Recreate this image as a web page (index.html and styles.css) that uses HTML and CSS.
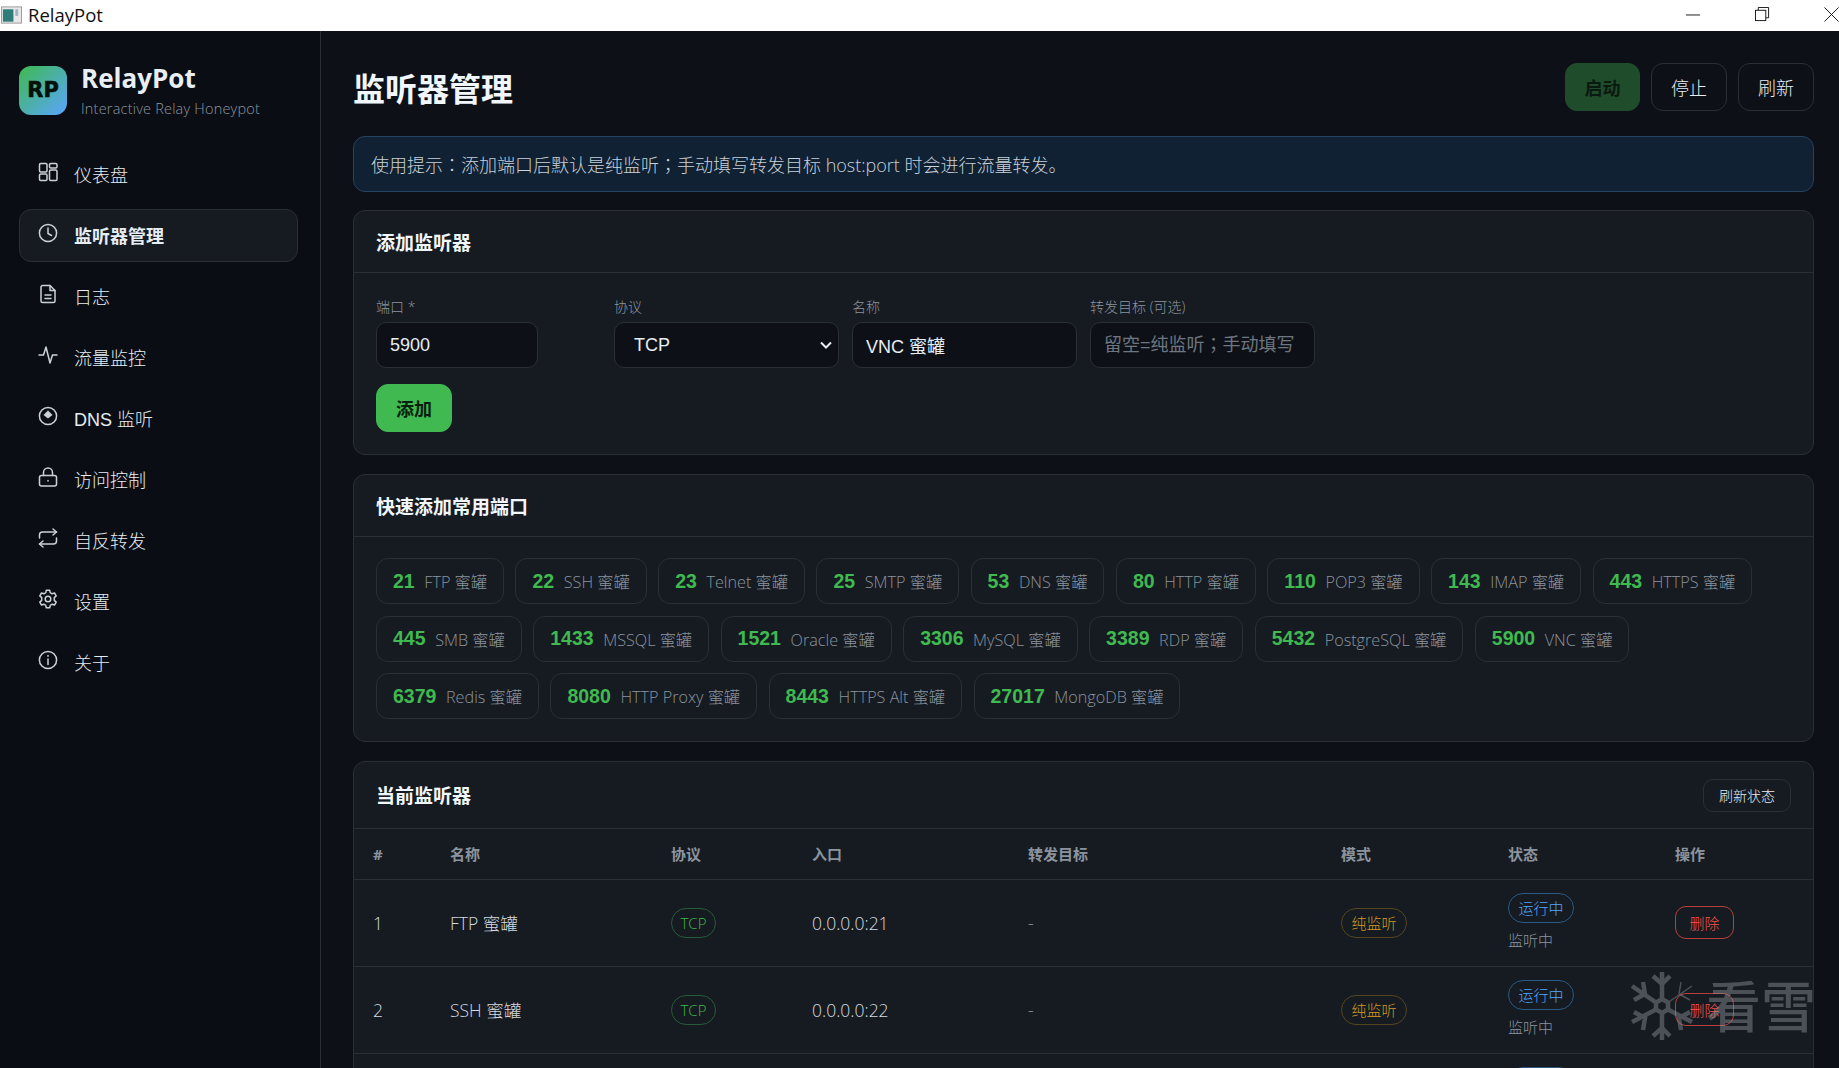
FILE: index.html
```html
<!DOCTYPE html>
<html lang="zh-CN">

<head>
    <meta charset="UTF-8">
    <meta name="viewport" content="width=device-width, initial-scale=1.0">
    <title>RelayPot</title>

    <link rel="stylesheet" href="styles.css">
</head>

<body>

    <div class="titlebar">
        <div class="titlebar-name">
            <svg class="titlebar-icon" viewBox="0 0 22 18">
                <rect x="0.5" y="0.5" width="21" height="17" fill="#e8e8e8" stroke="#9a9a9a" />
                <rect x="2" y="3" width="11" height="13" fill="#2f7d7a" />
                <rect x="15" y="3" width="3" height="7" fill="#9fb4c4" />
            </svg>
            <span>RelayPot</span>
        </div>
        <div class="window-controls">
            <svg viewBox="0 0 16 16" class="win-min"><path d="M0 8.5H15" /></svg>
            <svg viewBox="0 0 16 16" class="win-restore"><rect x="0.5" y="3.5" width="11" height="11" /><path d="M3.5 3.5V0.5H14.5V11.5H11.5" /></svg>
            <svg viewBox="0 0 16 16" class="win-close"><path d="M0.5 0.5L15.5 15.5M15.5 0.5L0.5 15.5" /></svg>
        </div>
    </div>

    <div class="app">
        <aside class="sidebar">
            <div class="brand">
                <div class="brand-logo">RP</div>
                <div class="brand-text">
                    <div class="brand-name">RelayPot</div>
                    <div class="brand-sub">Interactive Relay Honeypot</div>
                </div>
            </div>

            <nav class="nav">
                <a class="nav-item">
                    <svg class="nav-icon" viewBox="0 0 20 20"><rect x="1.5" y="1.5" width="7.5" height="8.5" rx="1.2" /><rect x="11.5" y="1.5" width="7.5" height="4.5" rx="1.2" /><rect x="1.5" y="12" width="7.5" height="6.5" rx="1.2" /><rect x="11.5" y="8" width="7.5" height="10.5" rx="1.2" /></svg>
                    <span>仪表盘</span>
                </a>
                <a class="nav-item active">
                    <svg class="nav-icon" viewBox="0 0 20 20"><circle cx="10" cy="10" r="8.6" /><path d="M10 5V10.5L13.5 12.5" /></svg>
                    <span>监听器管理</span>
                </a>
                <a class="nav-item">
                    <svg class="nav-icon" viewBox="0 0 20 20"><path d="M3 3A1.5 1.5 0 0 1 4.5 1.5H12L17 6.5V17A1.5 1.5 0 0 1 15.5 18.5H4.5A1.5 1.5 0 0 1 3 17Z" /><path d="M12 1.5V6.5H17M7 11H13M7 14.5H13" /></svg>
                    <span>日志</span>
                </a>
                <a class="nav-item">
                    <svg class="nav-icon" viewBox="0 0 20 20"><path d="M1 10H5.5L8 2L12 18L14.5 10H19" /></svg>
                    <span>流量监控</span>
                </a>
                <a class="nav-item">
                    <svg class="nav-icon" viewBox="0 0 20 20"><circle cx="10" cy="10" r="8.6" /><path class="fill" d="M10 4.5L14.5 9L10 12.5L5.5 9Z" /></svg>
                    <span>DNS 监听</span>
                </a>
                <a class="nav-item">
                    <svg class="nav-icon" viewBox="0 0 20 20"><rect x="1.5" y="8.5" width="17" height="10.5" rx="2" /><path d="M5.5 8.5V5.5A4.5 4.5 0 0 1 14.5 5.5V8.5" /><path d="M10 13.5V14" /></svg>
                    <span>访问控制</span>
                </a>
                <a class="nav-item">
                    <svg class="nav-icon" viewBox="0 0 20 20"><path d="M15 1L18.5 4L15 7" /><path d="M1.5 10V7A3 3 0 0 1 4.5 4H18.5" /><path d="M5 19L1.5 16L5 13" /><path d="M18.5 10V13A3 3 0 0 1 15.5 16H1.5" /></svg>
                    <span>自反转发</span>
                </a>
                <a class="nav-item">
                    <svg class="nav-icon" viewBox="0 0 20 20"><circle cx="10" cy="10" r="2.8" /><path d="M8.3 1.2H11.7L12.2 3.7L14.1 4.8L16.5 4L18.2 6.9L16.3 8.6V11.4L18.2 13.1L16.5 16L14.1 15.2L12.2 16.3L11.7 18.8H8.3L7.8 16.3L5.9 15.2L3.5 16L1.8 13.1L3.7 11.4V8.6L1.8 6.9L3.5 4L5.9 4.8L7.8 3.7Z" /></svg>
                    <span>设置</span>
                </a>
                <a class="nav-item">
                    <svg class="nav-icon" viewBox="0 0 20 20"><circle cx="10" cy="10" r="8.6" /><path d="M10 9V14.5M10 5.5V6.2" /></svg>
                    <span>关于</span>
                </a>
            </nav>
        </aside>

        <main class="main">
            <div class="page-head">
                <h1>监听器管理</h1>
                <div class="head-actions">
                    <button class="btn btn-start">启动</button>
                    <button class="btn">停止</button>
                    <button class="btn">刷新</button>
                </div>
            </div>

            <div class="tip"><span>使用提示<i lang="zh-TW">：</i>添加端口后默认是纯监听<i lang="zh-TW">；</i>手动填写转发目标 host:port 时会进行流量转发。</span></div>

            <section class="card">
                <div class="card-head">
                    <h2>添加监听器</h2>
                </div>
                <div class="card-body form-body">
                    <div class="form-grid">
                        <label class="field">
                            <span>端口 *</span>
                            <input class="port-input" type="text" value="5900">
                        </label>
                        <label class="field">
                            <span>协议</span>
                            <select>
                                <option>TCP</option>
                                <option>UDP</option>
                            </select>
                        </label>
                        <label class="field">
                            <span>名称</span>
                            <input type="text" value="VNC 蜜罐">
                        </label>
                        <label class="field">
                            <span>转发目标 (可选)</span>
                            <input lang="zh-TW" type="text" placeholder="留空=纯监听；手动填写">
                        </label>
                    </div>
                    <button class="btn btn-add">添加</button>
                </div>
            </section>

            <section class="card">
                <div class="card-head">
                    <h2>快速添加常用端口</h2>
                </div>
                <div class="card-body chips">
                    <button class="chip"><b>21</b>FTP 蜜罐</button>
                    <button class="chip"><b>22</b>SSH 蜜罐</button>
                    <button class="chip"><b>23</b>Telnet 蜜罐</button>
                    <button class="chip"><b>25</b>SMTP 蜜罐</button>
                    <button class="chip"><b>53</b>DNS 蜜罐</button>
                    <button class="chip"><b>80</b>HTTP 蜜罐</button>
                    <button class="chip"><b>110</b>POP3 蜜罐</button>
                    <button class="chip"><b>143</b>IMAP 蜜罐</button>
                    <button class="chip"><b>443</b>HTTPS 蜜罐</button>
                    <button class="chip"><b>445</b>SMB 蜜罐</button>
                    <button class="chip"><b>1433</b>MSSQL 蜜罐</button>
                    <button class="chip"><b>1521</b>Oracle 蜜罐</button>
                    <button class="chip"><b>3306</b>MySQL 蜜罐</button>
                    <button class="chip"><b>3389</b>RDP 蜜罐</button>
                    <button class="chip"><b>5432</b>PostgreSQL 蜜罐</button>
                    <button class="chip"><b>5900</b>VNC 蜜罐</button>
                    <button class="chip"><b>6379</b>Redis 蜜罐</button>
                    <button class="chip"><b>8080</b>HTTP Proxy 蜜罐</button>
                    <button class="chip"><b>8443</b>HTTPS Alt 蜜罐</button>
                    <button class="chip"><b>27017</b>MongoDB 蜜罐</button>
                </div>
            </section>

            <section class="card">
                <div class="card-head list-head">
                    <h2>当前监听器</h2>
                    <button class="btn btn-small">刷新状态</button>
                </div>
                <table class="listeners">
                    <colgroup>
                        <col class="col-id">
                        <col class="col-name">
                        <col class="col-proto">
                        <col class="col-entry">
                        <col class="col-target">
                        <col class="col-mode">
                        <col class="col-status">
                        <col>
                    </colgroup>
                    <thead>
                        <tr>
                            <th>#</th>
                            <th>名称</th>
                            <th>协议</th>
                            <th>入口</th>
                            <th>转发目标</th>
                            <th>模式</th>
                            <th>状态</th>
                            <th>操作</th>
                        </tr>
                    </thead>
                    <tbody>
                        <tr>
                            <td>1</td>
                            <td>FTP 蜜罐</td>
                            <td><span class="pill pill-green">TCP</span></td>
                            <td>0.0.0.0:21</td>
                            <td class="muted">-</td>
                            <td><span class="pill pill-amber">纯监听</span></td>
                            <td class="status-cell"><span class="pill pill-blue">运行中</span><div class="state-note">监听中</div></td>
                            <td><button class="btn-delete">删除</button></td>
                        </tr>
                        <tr>
                            <td>2</td>
                            <td>SSH 蜜罐</td>
                            <td><span class="pill pill-green">TCP</span></td>
                            <td>0.0.0.0:22</td>
                            <td class="muted">-</td>
                            <td><span class="pill pill-amber">纯监听</span></td>
                            <td class="status-cell"><span class="pill pill-blue">运行中</span><div class="state-note">监听中</div></td>
                            <td><button class="btn-delete">删除</button></td>
                        </tr>
                        <tr>
                            <td>3</td>
                            <td>Telnet 蜜罐</td>
                            <td><span class="pill pill-green">TCP</span></td>
                            <td>0.0.0.0:23</td>
                            <td class="muted">-</td>
                            <td><span class="pill pill-amber">纯监听</span></td>
                            <td class="status-cell"><span class="pill pill-blue">运行中</span><div class="state-note">监听中</div></td>
                            <td><button class="btn-delete">删除</button></td>
                        </tr>
                    </tbody>
                </table>
            </section>
        </main>
    </div>

    <!-- watermark over the corner of the shot -->
    <div class="watermark">
        <svg class="watermark-flake" viewBox="0 0 62 72">
            <path d="M31 2V29M31 43V70M1 16L25 32.5M1 52L25 39.5M61 52L37 39.5" />
            <path class="flake-thin" d="M61 16L37 32.5" />
            <path d="M22 6L31 14L39 6M22 66L31 58L39 66M3 30L14 24L12 12M3 42L14 48L12 60M59 42L48 48L50 60" />
            <path class="flake-thin" d="M59 30L48 24L50 12" />
            <path d="M31 29L37 32.5V39.5L31 43L25 39.5V32.5Z" />
        </svg>
        <span>看雪</span>
    </div>

</body>

</html>
```

FILE: styles.css
```css
* {
    box-sizing: border-box;
}

html,
body {
    margin: 0;
    padding: 0;
    height: 100%;
    overflow: hidden;
}

body {
    background-color: #0d1117;
    color: #e6edf3;
    font-family: "Open Sans", "Noto Sans CJK SC", sans-serif;
    font-size: 16px;
    font-weight: 300;
    display: flex;
    flex-direction: column;
}

h1,
h2 {
    margin: 0;
}

button,
input,
select {
    font-family: inherit;
}

.titlebar {
    height: 31px;
    flex: none;
    background-color: #fff;
    color: #111;
    display: flex;
    align-items: center;
    justify-content: space-between;
    padding-bottom: 2px;
}

.titlebar-name {
    display: flex;
    align-items: center;
    gap: 6px;
    font-size: 18.5px;
    font-weight: 400;
    padding-left: 1px;
}

.titlebar-icon {
    width: 21px;
    height: 18px;
}

.window-controls {
    display: flex;
    align-items: center;
    gap: 54px;
    height: 100%;
}

.window-controls svg {
    width: 15px;
    height: 15px;
    fill: none;
    stroke: #111;
    stroke-width: 1;
}

.app {
    flex: 1;
    display: flex;
    min-height: 0;
}

.sidebar {
    width: 321px;
    flex: none;
    background-color: #0a0d14;
    border-right: 1px solid #2a2f37;
    padding: 34px 22px 0 19px;
}

.brand {
    display: flex;
    align-items: center;
    gap: 14px;
    height: 50px;
}

.brand-logo {
    width: 48px;
    height: 49px;
    border-radius: 12px;
    background: linear-gradient(135deg, #3fb950, #58a6ff);
    color: #04100a;
    font-family: "DejaVu Sans", sans-serif;
    font-weight: 700;
    font-size: 21px;
    -webkit-text-stroke: 0.5px #04100a;
    display: flex;
    align-items: center;
    justify-content: center;
}

.brand-text {
    padding-top: 2px;
}

.brand-name {
    font-size: 26px;
    font-weight: 700;
    line-height: 32px;
    color: #e9eef4;
}

.brand-sub {
    font-size: 14.5px;
    font-weight: 300;
    line-height: 22px;
    margin-top: 4px;
    color: #8b949e;
    letter-spacing: 0.2px;
}

.nav {
    display: flex;
    flex-direction: column;
    gap: 8px;
    margin-top: 33px;
}

.nav-item {
    height: 53px;
    display: flex;
    align-items: center;
    gap: 16px;
    padding: 0 18px 2px;
    border: 1px solid transparent;
    border-radius: 12px;
    font-family: "Liberation Sans", "Noto Sans CJK SC", sans-serif;
    font-size: 18px;
    color: #e6edf3;
}

.nav-item.active {
    background-color: #161b22;
    border-color: #2a2f37;
    font-weight: 700;
}

.nav-icon {
    width: 20px;
    height: 20px;
    flex: none;
    margin-top: -4px;
    fill: none;
    stroke: #c9d1d9;
    stroke-width: 1.5;
    stroke-linecap: round;
    stroke-linejoin: round;
}

.nav-icon .fill {
    fill: #c9d1d9;
    stroke: none;
}

.main {
    flex: 1;
    min-width: 0;
    overflow: hidden;
    padding: 32px 25px 0 32px;
}

.page-head {
    display: flex;
    align-items: center;
    justify-content: space-between;
    height: 48px;
    margin-bottom: 25px;
}

h1 {
    font-size: 32px;
    font-weight: 700;
    color: #f0f6fc;
}

.head-actions {
    display: flex;
    gap: 11px;
}

.btn {
    height: 48px;
    width: 76px;
    background-color: transparent;
    border: 1px solid #2a2f37;
    border-radius: 12px;
    color: #e6edf3;
    font-size: 18px;
    font-weight: 300;
    padding: 0;
}

.btn-start {
    width: 75px;
    background-color: #1f4d2b;
    border-color: #1f4d2b;
    color: #0b1a10;
    font-weight: 700;
}

.tip {
    height: 56px;
    display: flex;
    align-items: center;
    padding: 0 17px;
    background-color: #0f2133;
    border: 1px solid #26445f;
    border-radius: 12px;
    font-size: 18px;
    color: #c9d1d9;
    margin-bottom: 18px;
}

.tip i {
    font-style: normal;
}

.card {
    background-color: #161b22;
    border: 1px solid #2a2f37;
    border-radius: 12px;
    margin-bottom: 19px;
}

.card-head {
    height: 62px;
    display: flex;
    align-items: center;
    justify-content: space-between;
    padding: 0 22px;
    border-bottom: 1px solid #2a2f37;
}

h2 {
    font-size: 19px;
    font-weight: 700;
    color: #f0f6fc;
}

.form-body {
    padding: 24px 22px 22px;
}

.form-grid {
    display: grid;
    grid-template-columns: repeat(4, 225px);
    gap: 13px;
}

.field {
    display: flex;
    flex-direction: column;
    gap: 5px;
}

.field span {
    font-size: 14px;
    line-height: 20px;
    color: #8b949e;
}

.field input,
.field select {
    height: 46px;
    width: 100%;
    background-color: #0d1117;
    border: 1px solid #2a2f37;
    border-radius: 10px;
    color: #e6edf3;
    font-family: "Liberation Sans", "Noto Sans CJK SC", sans-serif;
    font-size: 18px;
    font-weight: 400;
    padding: 0 13px;
    outline: none;
}

.field select {
    appearance: none;
    padding: 0 19px;
    background-image: url("data:image/svg+xml,%3Csvg xmlns='http://www.w3.org/2000/svg' viewBox='0 0 12 8'%3E%3Cpath d='M1 1.5L6 6.5L11 1.5' fill='none' stroke='%23e6edf3' stroke-width='2'/%3E%3C/svg%3E");
    background-repeat: no-repeat;
    background-position: right 6px center;
    background-size: 12px 8px;
}

.field input::placeholder {
    color: #6e7681;
}

.port-input {
    max-width: 162px;
}

.btn-add {
    display: block;
    margin-top: 16px;
    background-color: #3fb950;
    border-color: #3fb950;
    color: #06200d;
    font-weight: 700;
}

.chips {
    display: flex;
    flex-wrap: wrap;
    gap: 11.5px;
    padding: 21px 22px 22px;
}

.chip {
    height: 46px;
    display: flex;
    align-items: center;
    gap: 9.6px;
    padding: 0 16px;
    background-color: transparent;
    border: 1px solid #2a2f37;
    border-radius: 12px;
    color: #8b949e;
    font-size: 16.2px;
    font-weight: 300;
}

.chip b {
    color: #3fb950;
    font-family: "Liberation Sans", sans-serif;
    font-size: 19.5px;
    font-weight: 700;
}

.list-head {
    height: 67px;
    padding-right: 22px;
}

.btn-small {
    height: 33px;
    width: 88px;
    font-size: 14px;
    border-radius: 10px;
}

.listeners {
    width: 100%;
    border-collapse: collapse;
    table-layout: fixed;
}

.col-id {
    width: 77px;
}

.col-name {
    width: 221px;
}

.col-proto {
    width: 141px;
}

.col-entry {
    width: 216px;
}

.col-target {
    width: 313px;
}

.col-mode,
.col-status {
    width: 167px;
}

.listeners th {
    height: 50px;
    text-align: left;
    padding: 0 19px;
    font-size: 15px;
    font-weight: 700;
    color: #8b949e;
    border-bottom: 1px solid #2a2f37;
}

.listeners td {
    height: 87px;
    padding: 0 19px;
    font-size: 17.5px;
    color: #d4dae0;
    border-bottom: 1px solid #2a2f37;
}

.listeners td.muted {
    color: #8b949e;
}

.listeners td.status-cell {
    padding-bottom: 3px;
}

.pill {
    display: inline-flex;
    align-items: center;
    justify-content: center;
    height: 30px;
    padding: 0 9.5px;
    border-radius: 15px;
    border: 1px solid;
    font-size: 15px;
    vertical-align: middle;
}

.pill-green {
    color: #3fb950;
    border-color: #275a3a;
    padding: 0 8.5px;
}

.pill-amber {
    color: #d29922;
    border-color: #55461f;
}

.pill-blue {
    color: #58a6ff;
    border-color: #285a85;
}

.state-note {
    font-size: 15px;
    line-height: 20px;
    margin-top: 7px;
    color: #8b949e;
}

.btn-delete {
    height: 33px;
    width: 59px;
    background-color: transparent;
    border: 1px solid #b5403c;
    border-radius: 11px;
    color: #f85149;
    font-size: 15px;
    font-weight: 300;
    padding: 0;
}

.watermark {
    position: absolute;
    right: 23px;
    bottom: 26px;
    display: flex;
    align-items: center;
    gap: 13px;
    color: #969ba0;
    opacity: 0.42;
    font-size: 55px;
    line-height: 72px;
    font-weight: 500;
    pointer-events: none;
}

.watermark-flake {
    width: 62px;
    height: 72px;
    fill: none;
    stroke: #969ba0;
    stroke-width: 4.5;
}

.flake-thin {
    stroke-width: 1.5;
}
```
